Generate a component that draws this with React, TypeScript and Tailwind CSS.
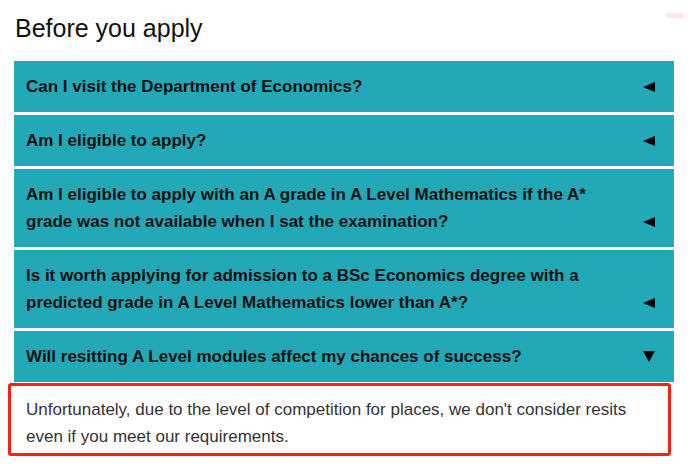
import React from 'react'

const faqs = [
    { q: "Can I visit the Department of Economics?", open: false },
    { q: "Am I eligible to apply?", open: false },
    { q: "Am I eligible to apply with an A grade in A Level Mathematics if the A* grade was not available when I sat the examination?", open: false },
    { q: "Is it worth applying for admission to a BSc Economics degree with a predicted grade in A Level Mathematics lower than A*?", open: false },
    { q: "Will resitting A Level modules affect my chances of success?", open: true },
]

const Arrow = ({ open }: { open: boolean }) => {
    if (open) {
        return (
            <svg width="12" height="11" viewBox="0 0 12 11" className="shrink-0">
                <polygon points="0,0 12,0 6,11" fill="#000" />
            </svg>
        )
    }
    return (
        <svg width="12" height="10" viewBox="0 0 12 10" className="shrink-0">
            <polygon points="12,0 12,10 0,5" fill="#000" />
        </svg>
    )
}

const App = () => {
    return (
        <div className="relative min-h-[471px] bg-white px-[14px] pt-[13px] font-['Liberation_Sans',Arial,sans-serif]">
            <div className="absolute left-[666px] top-[13px] h-[5px] w-[17px] rounded-bl-[4px] bg-[#fde6e6]" />

            <h2 className="mb-[18px] pl-[1px] text-[25px] leading-[30px] text-[#111]">Before you apply</h2>

            <div className="flex w-[660px] flex-col gap-[3px]">
                {faqs.map((item) => (
                    <div
                        key={item.q}
                        className="flex items-end gap-[24px] bg-[#22a8b6] py-[12px] pl-[12px] pr-[19px]"
                    >
                        <p className="flex-1 text-[17px] font-bold leading-[27px] text-[#111]">{item.q}</p>
                        <div className="flex h-[27px] items-center">
                            <Arrow open={item.open} />
                        </div>
                    </div>
                ))}
            </div>

            {/* expanded answer */}
            <div className="relative w-[660px] pb-[7px] pl-[12px] pr-[30px] pt-[14px]">
                <p className="text-[17px] leading-[27px] text-[#333]">
                    Unfortunately, due to the level of competition for places, we don't consider resits even if you meet our requirements.
                </p>
                <div className="pointer-events-none absolute bottom-[1px] left-[-6.5px] right-[3px] top-[1px] rounded-[3px] border-[3px] border-[#ff1f14]" />
            </div>
        </div>
    )
}

export default App
